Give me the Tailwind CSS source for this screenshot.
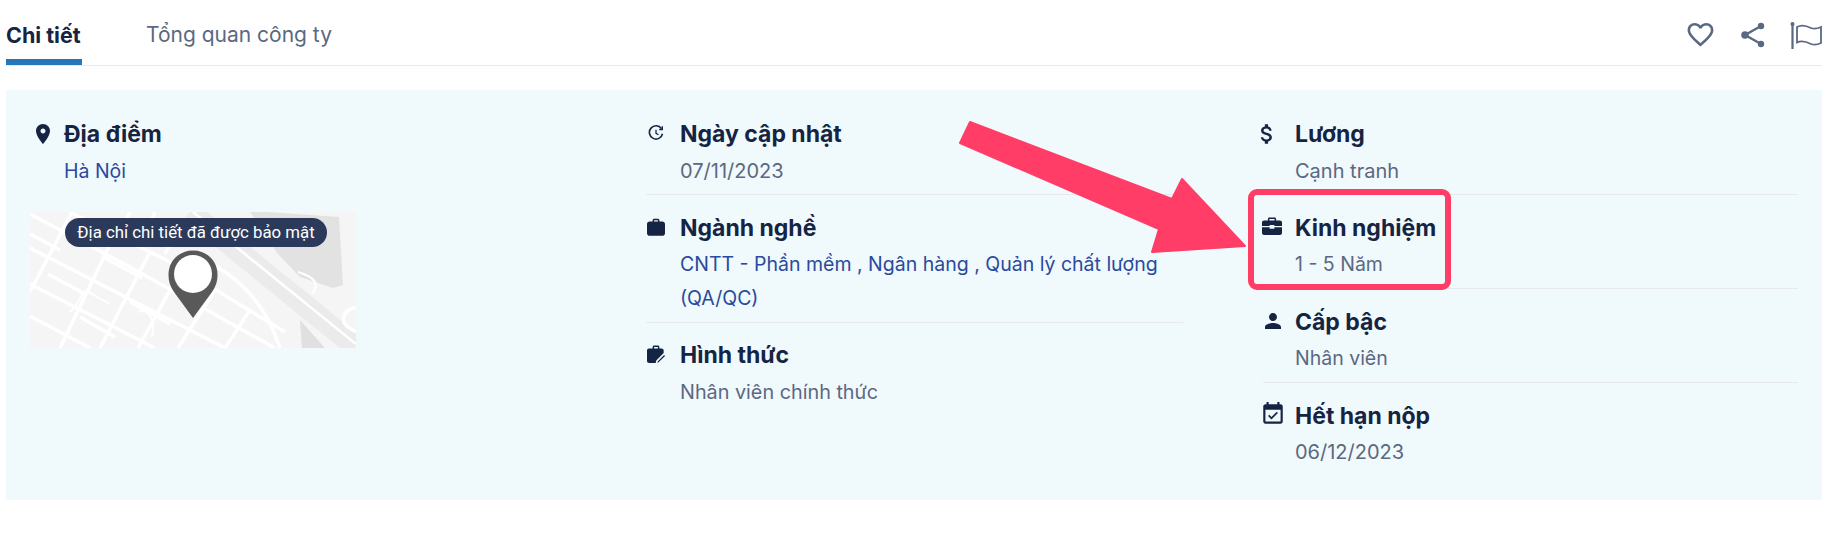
<!DOCTYPE html>
<html lang="vi">
<head>
  <meta charset="UTF-8">
  <title>Chi tiết</title>
  <script src="https://cdn.jsdelivr.net/npm/@tailwindcss/browser@4"></script>
</head>
<body class="bg-white font-['Inter','Noto_Sans',sans-serif] text-[#152442]">
  <div class="relative w-[1848px] h-[536px] overflow-hidden">
    <!-- tabs -->
    <div class="ml-[6px] w-[1816px] h-[66px] border-b border-[#e8e9ec] flex items-start justify-between">
      <div class="flex gap-[64px]">
        <div class="w-[76px] h-[65px] border-b-[6px] border-[#2478b9] pt-[21px] text-[21.5px] leading-[28px] font-bold whitespace-nowrap">Chi tiết</div>
        <div class="pt-[21px] text-[21px] leading-[28px] text-[#5b6881] whitespace-nowrap">Tổng quan công ty</div>
      </div>
      <div class="flex items-center pt-[19px] text-[#5b6881]">
        <svg class="w-[31px] h-[31px]" viewBox="0 0 24 24" fill="currentColor"><path d="M16.5 3c-1.74 0-3.41.81-4.5 2.09C10.91 3.81 9.24 3 7.5 3 4.42 3 2 5.42 2 8.5c0 3.78 3.4 6.86 8.55 11.54L12 21.35l1.45-1.32C18.6 15.36 22 12.28 22 8.5 22 5.42 19.58 3 16.5 3zm-4.4 15.55l-.1.1-.1-.1C7.14 14.24 4 11.39 4 8.5 4 6.5 5.5 5 7.5 5c1.54 0 3.04.99 3.57 2.36h1.87C13.46 5.99 14.96 5 16.5 5c2 0 3.5 1.5 3.5 3.5 0 2.89-3.14 5.74-7.9 10.05z"/></svg>
        <svg class="ml-[24px] w-[26px] h-[30px]" viewBox="0 0 26 30" fill="currentColor" stroke="currentColor"><line x1="21" y1="6" x2="5" y2="15" stroke-width="2.4"/><line x1="21" y1="24" x2="5" y2="15" stroke-width="2.4"/><circle cx="21" cy="6" r="3.2" stroke="none"/><circle cx="21" cy="24" r="3.2" stroke="none"/><circle cx="5" cy="15" r="3.8" stroke="none"/></svg>
        <svg class="ml-[24px] w-[32px] h-[30px]" viewBox="0 0 32 30" fill="none" stroke="currentColor"><line x1="2.5" y1="4" x2="2.5" y2="29" stroke-width="2.2"/><circle cx="2.5" cy="4" r="2" fill="currentColor" stroke="none"/><path d="M7 7 C12 4 17 6 21 8 C25 9.5 28 8.5 31 7 V23 C28 24.5 25 25.5 21 24 C17 22 12 20 7 22.5 Z" stroke-width="1.8"/></svg>
      </div>
    </div>

    <!-- panel -->
    <div class="ml-[6px] mt-[24px] w-[1816px] h-[410px] bg-[#f0f9fc] pl-[24px] pt-[29px] grid grid-cols-[616px_617px_535px] content-start">
      <!-- location -->
      <div>
        <div class="flex">
          <div class="w-[34px] shrink-0 pt-[3px] pl-[1px]">
            <svg class="w-[24px] h-[24px]" viewBox="0 0 24 24" fill="currentColor"><path d="M12 2C8.13 2 5 5.13 5 9c0 5.25 7 13 7 13s7-7.75 7-13c0-3.87-3.13-7-7-7zm0 9.5c-1.38 0-2.5-1.12-2.5-2.5s1.12-2.5 2.5-2.5 2.5 1.12 2.5 2.5-1.12 2.5-2.5 2.5z"/></svg>
          </div>
          <div>
            <div class="text-[23px] leading-[30px] font-bold">Địa điểm</div>
            <div class="mt-[5px] text-[19.5px] leading-[34px] text-[#2a4a9e]">Hà Nội</div>
          </div>
        </div>
        <!-- map thumbnail -->
        <div class="relative mt-[24px] w-[326px] h-[136px] bg-[#f5f5f5] overflow-hidden">
          <svg class="absolute inset-0 w-full h-full" viewBox="0 0 326 136" fill="none">
            <path d="M220 0 H237 L309 5 L313 73 L303 76 L270 65 L247 41 Z" fill="#e2e2e2"/>
            <path d="M270 108 L295 136 H272 Z" fill="#e0e0e0"/>
            <path d="M160 0 L326 135" stroke="#ebebeb" stroke-width="22"/>
            <path d="M163 0 L326 132" stroke="#fff" stroke-width="2.5"/>
            <g stroke="#fff" stroke-width="3.5">
              <path d="M0 2 L100 55 L245 136 M0 36 L195 136 M0 72 L125 136 M0 104 L60 136 M40 0 L140 50 L255 120"/>
              <path d="M42 0 L0 80 M85 22 L30 136 M120 40 L70 136 M150 60 L108 136 M185 78 L148 136 M220 98 L195 136"/>
              <path d="M0 22 L30 38 M18 62 L55 82 M75 46 L112 66 M100 90 L140 112 M50 105 L85 125"/>
              <path d="M100 0 L88 24 M125 0 L110 35 M150 12 L135 42"/>
              <path d="M150 40 C205 55 235 90 250 136"/>
              <path d="M326 95 C310 100 308 112 326 120"/>
            </g>
            <g stroke="#fff" stroke-width="2">
              <path d="M40 100 C55 85 50 75 62 82 M62 82 L80 92 M108 100 C120 95 125 110 122 125"/>
              <path d="M268 60 C285 65 290 72 282 82"/>
            </g>
          </svg>
          <div class="absolute left-[35px] top-[6px] w-[262px] h-[29px] rounded-[15px] bg-[#2b3a5b] flex items-center justify-center font-['Roboto',sans-serif] text-[16.8px] text-white whitespace-nowrap">Địa chỉ chi tiết đã được bảo mật</div>
          <svg class="absolute left-[138px] top-[38px] w-[50px] h-[68px]" viewBox="0 0 50 68"><path d="M25 68 L6 42 C2 36 0.500 31 0.500 24.500 C0.500 11 11 0.500 25 0.500 C39 0.500 49.500 11 49.500 24.500 C49.500 31 48 36 44 42 Z" fill="#595959"/><circle cx="25" cy="24" r="19" fill="#fff"/></svg>
        </div>
      </div>

      <!-- middle column -->
      <div class="w-[537px]">
        <div class="flex pb-[7px] border-b border-[#e8e9ec]">
          <div class="w-[34px] shrink-0 pt-[6px] pl-[2px]">
            <svg class="w-[16px] h-[16px]" viewBox="0 0 15 15" fill="none" stroke="currentColor" stroke-width="1.5"><path d="M12.6 3.4 A6.2 6.2 0 1 0 13.6 8.2"/><path d="M10.5 4.2 L13.4 4.2 L13.4 1.2" stroke-width="1.3"/><path d="M7.5 4.4 V7.8 L9.8 9.2" stroke-width="1.2"/></svg>
          </div>
          <div>
            <div class="text-[23px] leading-[30px] font-bold">Ngày cập nhật</div>
            <div class="mt-[5px] -mb-[1px] text-[20px] leading-[34px] text-[#5b6881]">07/11/2023</div>
          </div>
        </div>
        <div class="flex mt-[18px] pb-[7px] border-b border-[#e8e9ec]">
          <div class="w-[34px] shrink-0 pt-[5px] pl-[1px]">
            <svg class="w-[18px] h-[18px]" viewBox="0 0 16 16" fill="currentColor"><path d="M5 3V2c0-.8.6-1.4 1.4-1.4h3.2C10.4.6 11 1.200 11 2v1h2.600C14.900 3 16 4 16 5.300v8.200c0 1.300-1 2.300-2.300 2.300H2.300C1 15.800 0 14.800 0 13.500V5.300C0 4 1 3 2.300 3H5zm1.300 0h3.400V1.900H6.300V3z"/></svg>
          </div>
          <div>
            <div class="text-[23px] leading-[30px] font-bold">Ngành nghề</div>
            <div class="mt-[4px] text-[19.5px] leading-[34px] text-[#2a4a9e]">CNTT - Phần mềm , Ngân hàng , Quản lý chất lượng (QA/QC)</div>
          </div>
        </div>
        <div class="flex mt-[17px]">
          <div class="w-[34px] shrink-0 pt-[5px] pl-[1px]">
            <svg class="w-[18px] h-[18px]" viewBox="0 0 16 16" fill="currentColor"><path d="M5 3V1.800C5 1 5.600.4 6.400.4h3.200C10.400.4 11 1 11 1.800V3h2c1 0 1.800.8 1.800 1.800v2.400L8.200 13.800 7.700 16H1.800C.8 16 0 15.200 0 14.200V4.800C0 3.800.8 3 1.800 3H5zm1.300 0h3.400V1.700H6.300V3z"/><path d="M9.500 14.600 L15.200 8.900 L16 9.700 L10.300 15.400 L9.200 15.800 Z"/></svg>
          </div>
          <div>
            <div class="text-[23px] leading-[30px] font-bold">Hình thức</div>
            <div class="mt-[5px] text-[19.8px] leading-[34px] text-[#5b6881]">Nhân viên chính thức</div>
          </div>
        </div>
      </div>

      <!-- right column -->
      <div>
        <div class="flex pb-[7px] border-b border-[#e8e9ec]">
          <div class="w-[32px] shrink-0 pt-[2px]">
            <svg class="-ml-[9px] w-[26px] h-[26px]" viewBox="0 0 24 24" fill="currentColor"><path d="M11.800 10.900c-2.270-.59-3-1.200-3-2.150 0-1.090 1.010-1.850 2.700-1.850 1.780 0 2.440.85 2.500 2.100h2.210c-.07-1.720-1.120-3.300-3.210-3.810V3h-3v2.160c-1.940.42-3.500 1.680-3.500 3.610 0 2.310 1.910 3.460 4.700 4.130 2.500.6 3 1.480 3 2.410 0 .69-.49 1.790-2.700 1.790-2.060 0-2.870-.92-2.980-2.100h-2.200c.12 2.190 1.760 3.420 3.680 3.830V21h3v-2.150c1.950-.37 3.500-1.500 3.500-3.550 0-2.840-2.430-3.810-4.700-4.400z"/></svg>
          </div>
          <div>
            <div class="text-[23px] leading-[30px] font-bold">Lương</div>
            <div class="mt-[5px] -mb-[1px] text-[20px] leading-[34px] text-[#5b6881]">Cạnh tranh</div>
          </div>
        </div>
        <div class="flex mt-[18px] pb-[7px] border-b border-[#e8e9ec]">
          <div class="w-[32px] shrink-0 pt-[4px]">
            <svg class="-ml-[1px] w-[20px] h-[18px]" viewBox="0 0 17 16" fill="currentColor" preserveAspectRatio="none"><path d="M5 3V1.800C5 1 5.600.4 6.400.4h4.200C11.400.4 12 1 12 1.800V3h3.200C16.200 3 17 3.800 17 4.800V8H10.500V7h-4v1H0V4.800C0 3.800.8 3 1.800 3H5zm1.300 0h4.400V1.700H6.300V3z"/><path d="M0 9.200H6.500v1.300h4V9.200H17v5c0 1-.8 1.800-1.800 1.800H1.800C.8 16 0 15.200 0 14.200z"/></svg>
          </div>
          <div>
            <div class="text-[23px] leading-[30px] font-bold">Kinh nghiệm</div>
            <div class="mt-[4px] text-[19.5px] leading-[34px] text-[#5b6881]">1 - 5 Năm</div>
          </div>
        </div>
        <div class="flex mt-[18px] pb-[7px] border-b border-[#e8e9ec]">
          <div class="w-[32px] shrink-0 pt-[2px]">
            <svg class="-ml-[2px] w-[24px] h-[24px]" viewBox="0 0 24 24" fill="currentColor"><path d="M12 12c2.210 0 4-1.790 4-4s-1.790-4-4-4-4 1.790-4 4 1.790 4 4 4zm0 2c-2.670 0-8 1.340-8 4v2h16v-2c0-2.660-5.330-4-8-4z"/></svg>
          </div>
          <div>
            <div class="text-[23px] leading-[30px] font-bold">Cấp bậc</div>
            <div class="mt-[4px] text-[19.5px] leading-[34px] text-[#5b6881]">Nhân viên</div>
          </div>
        </div>
        <div class="flex mt-[18px]">
          <div class="w-[32px] shrink-0">
            <svg class="-ml-[3px] w-[26px] h-[26px]" viewBox="0 0 24 24" fill="currentColor"><path d="M16.530 11.060L15.470 10l-4.880 4.880-2.120-2.120-1.060 1.060L10.590 17l5.940-5.940zM19 3h-1V1h-2v2H8V1H6v2H5c-1.110 0-1.990.9-1.990 2L3 19c0 1.100.89 2 2 2h14c1.100 0 2-.9 2-2V5c0-1.100-.9-2-2-2zm0 16H5V8h14v11z"/></svg>
          </div>
          <div>
            <div class="text-[23px] leading-[30px] font-bold">Hết hạn nộp</div>
            <div class="mt-[4px] text-[20px] leading-[34px] text-[#5b6881]">06/12/2023</div>
          </div>
        </div>
      </div>
    </div>

    <!-- annotation over the screenshot -->
    <svg class="absolute left-0 top-0 w-[1848px] h-[536px] pointer-events-none" viewBox="0 0 1848 536">
      <path d="M970 122 L960 143 L1159 229 L1152 252 L1245 246 L1182 179 L1172 199 Z" fill="#ff3d67" stroke="#ff3d67" stroke-width="2" stroke-linejoin="round"/>
    </svg>
    <div class="absolute left-[1248px] top-[189px] w-[203px] h-[101px] border-[6px] border-[#ff3d67] rounded-[9px]"></div>
  </div>
</body>
</html>
